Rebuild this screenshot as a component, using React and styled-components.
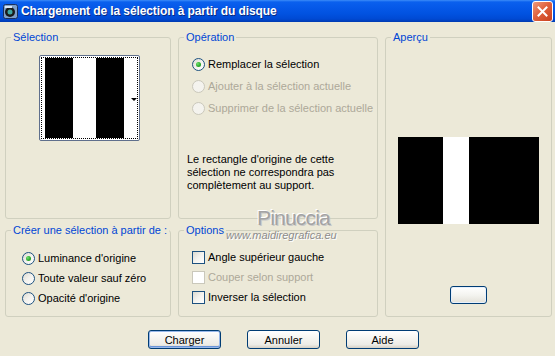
import React from 'react';
import styled, { createGlobalStyle } from 'styled-components';

const Global = createGlobalStyle`
  html, body { margin: 0; padding: 0; background: #ECE9D8; }
  body { font-family: "Liberation Sans", Arial, sans-serif; font-size: 11px; }
  * { box-sizing: border-box; }
`;

const Window = styled.div`
  position: relative;
  width: 555px;
  height: 356px;
  background: #ECE9D8;
  display: flex;
  flex-direction: column;
  overflow: hidden;
  color: #000;
`;

const TitleBar = styled.div`
  height: 22px;
  flex: none;
  display: flex;
  align-items: center;
  padding: 0 2px 0 3px;
  background: linear-gradient(#3C8CF8 0px, #0A60EE 2px, #0558E8 8px, #0152E0 14px, #0049D3 19px, #003BB0 22px);
`;

const TitleText = styled.span`
  margin-left: 3px;
  color: #fff;
  font-family: "Liberation Sans", Arial, sans-serif;
  font-weight: bold;
  font-size: 12px;
  letter-spacing: -0.1px;
  text-shadow: 1px 1px 0 #0A2A80;
  white-space: nowrap;
`;

const CloseButton = styled.div`
  margin-left: auto;
  width: 21px;
  height: 21px;
  border: 1px solid #fff;
  border-radius: 3px;
  background: linear-gradient(135deg, #EE9A7D 0%, #E0623E 45%, #C8411E 100%);
  display: flex;
  align-items: center;
  justify-content: center;
`;

const Body = styled.div`
  display: grid;
  grid-template-columns: 166px 200px 167px;
  grid-template-rows: 188px 93px;
  column-gap: 7px;
  row-gap: 5px;
  padding: 9px 0 0 5px;
`;

const Group = styled.fieldset`
  margin: 0;
  padding: 0;
  min-width: 0;
  border: 1px solid #D0D0BF;
  border-radius: 3px;
  grid-row: ${p => p.$row || 'auto'};
  grid-column: ${p => p.$col || 'auto'};
  display: flex;
  flex-direction: column;
  align-items: ${p => p.$center ? 'center' : 'stretch'};
`;

const Legend = styled.legend`
  margin-left: 5px;
  padding: 0 2px;
  color: #0046D5;
  font-size: 11px;
  line-height: 13px;
  white-space: nowrap;
`;

const Thumb = styled.div`
  margin: 11px 0 0 33px;
  width: 101px;
  height: 86px;
  border: 1px solid #5F6F8C;
  border-radius: 2px;
  background: #fff;
  padding: 1px;
`;

const Focus = styled.div`
  height: 100%;
  border: 1px dotted #000;
  padding-left: 3px;
  display: flex;
`;

const Stripe = styled.div`
  width: ${p => p.$w}px;
  flex: ${p => p.$grow ? 1 : 'none'};
  background: ${p => p.$black ? '#000' : '#fff'};
  display: flex;
  align-items: center;
  justify-content: flex-end;
`;

const Arrow = styled.div`
  width: 0;
  height: 0;
  margin: 2px 0 0 0;
  border-left: 3px solid transparent;
  border-right: 3px solid transparent;
  border-top: 3px solid #000;
`;

const Options = styled.div`
  display: flex;
  flex-direction: column;
  padding: ${p => p.$pt}px 0 0 ${p => p.$pl}px;
`;

const Row = styled.div`
  height: ${p => p.$h}px;
  display: flex;
  align-items: center;
  gap: 3px;
  color: ${p => p.$disabled ? '#ACA899' : '#000'};
  white-space: nowrap;
`;

const RadioCircle = styled.span`
  width: 13px;
  height: 13px;
  flex: none;
  border-radius: 50%;
  border: 1px solid ${p => p.$disabled ? '#CAC8BB' : '#1C5180'};
  background: ${p => p.$disabled ? '#F4F3EE' : 'linear-gradient(135deg, #DCDAD1 0%, #F3F2EE 50%, #FFFFFF 100%)'};
  display: flex;
  align-items: center;
  justify-content: center;
`;

const RadioDot = styled.span`
  width: 5px;
  height: 5px;
  border-radius: 50%;
  background: radial-gradient(circle at 35% 35%, #6EE06E 0%, #2DAA2D 55%, #168A16 100%);
`;

const CheckBox = styled.span`
  width: 13px;
  height: 13px;
  flex: none;
  border: 1px solid ${p => p.$disabled ? '#CAC8BB' : '#1C5180'};
  background: ${p => p.$disabled ? '#fff' : 'linear-gradient(135deg, #DCDAD1 0%, #F3F2EE 50%, #FFFFFF 100%)'};
`;

const Note = styled.p`
  margin: 34px 0 0 8px;
  line-height: 13px;
  font-size: 11px;
`;

const Preview = styled.div`
  margin-top: 93px;
  width: 141px;
  height: 87px;
  display: flex;
`;

const PreviewBlock = styled.div`
  width: ${p => p.$w}px;
  background: ${p => p.$black ? '#000' : '#fff'};
`;

const SmallButton = styled.div`
  margin-top: 62px;
  width: 37px;
  height: 18px;
  border: 1px solid #003C74;
  border-radius: 3px;
  background: linear-gradient(#FFFFFF 0%, #F4F4F0 50%, #E3E1D8 100%);
  box-shadow: inset 0 0 0 1px #E6F0FC;
`;

const ButtonBar = styled.div`
  display: flex;
  justify-content: center;
  gap: 26px;
  padding-left: 12px;
  margin-top: 13px;
`;

const Button = styled.button`
  width: 73px;
  height: 19px;
  padding: 0;
  font-family: "Liberation Sans", Arial, sans-serif;
  font-size: 11px;
  color: #000;
  border: 1px solid #003C74;
  border-radius: 3px;
  background: linear-gradient(#FFFFFF 0%, #F6F5F1 40%, #ECEBE6 80%, #D6D0C5 100%);
  box-shadow: ${p => p.$default ? 'inset 0 0 0 1px #98B8EA, inset 0 -1px 0 1px #6A94D8' : 'none'};
`;

const Watermark = styled.div`
  position: absolute;
  left: 257px;
  top: 206px;
  font-family: "Liberation Sans", Arial, sans-serif;
  font-size: 21px;
  letter-spacing: -0.8px;
  color: #A3A3A3;
  text-shadow: -1px -1px 0 #fff, 1px 1px 0 #c8c8c8;
  pointer-events: none;
`;

const WatermarkUrl = styled.div`
  position: absolute;
  left: 226px;
  top: 229px;
  font-family: "Liberation Sans", Arial, sans-serif;
  font-style: italic;
  font-size: 11px;
  color: #8C8C8C;
  text-shadow: 1px 1px 0 #fff;
  pointer-events: none;
`;

const Radio = ({ checked, disabled, h, children }) => (
  <Row $h={h} $disabled={disabled}>
    <RadioCircle $disabled={disabled}>{checked && <RadioDot />}</RadioCircle>
    {children}
  </Row>
);

const Check = ({ disabled, h, children }) => (
  <Row $h={h} $disabled={disabled}>
    <CheckBox $disabled={disabled} />
    {children}
  </Row>
);

const AppIcon = () => (
  <svg width="15" height="15" viewBox="0 0 15 15">
    <rect x="0.5" y="0.5" width="14" height="14" rx="2" fill="#7FA0C8" stroke="#1B2F5A" />
    <circle cx="7" cy="8" r="5" fill="#1A1A1A" />
    <circle cx="7" cy="8" r="2.5" fill="#3FA6A0" />
    <path d="M2 2 L9 2 L9 4 L2 4 Z" fill="#D8E6F6" />
  </svg>
);

export default function App() {
  return (
    <>
      <Global />
      <Window>
        <TitleBar>
          <AppIcon />
          <TitleText>Chargement de la sélection à partir du disque</TitleText>
          <CloseButton>
            <svg width="11" height="11" viewBox="0 0 11 11">
              <path d="M1.5 1.5 L9.5 9.5 M9.5 1.5 L1.5 9.5" stroke="#fff" strokeWidth="2" strokeLinecap="square" />
            </svg>
          </CloseButton>
        </TitleBar>
        <Body>
          <Group $row="1" $col="1">
            <Legend>Sélection</Legend>
            <Thumb>
              <Focus>
                <Stripe $w={28} $black />
                <Stripe $w={23} />
                <Stripe $w={28} $black />
                <Stripe $grow><Arrow /></Stripe>
              </Focus>
            </Thumb>
          </Group>
          <Group $row="1" $col="2">
            <Legend>Opération</Legend>
            <Options $pt={9} $pl={13}>
              <Radio h={22} checked>Remplacer la sélection</Radio>
              <Radio h={22} disabled>Ajouter à la sélection actuelle</Radio>
              <Radio h={22} disabled>Supprimer de la sélection actuelle</Radio>
            </Options>
            <Note>
              Le rectangle d'origine de cette<br />
              sélection ne correspondra pas<br />
              complètement au support.
            </Note>
          </Group>
          <Group $row="1 / span 2" $col="3" $center>
            <Legend>Aperçu</Legend>
            <Preview>
              <PreviewBlock $w={45} $black />
              <PreviewBlock $w={26} />
              <PreviewBlock $w={70} $black />
            </Preview>
            <SmallButton />
          </Group>
          <Group $row="2" $col="1">
            <Legend>Créer une sélection à partir de :</Legend>
            <Options $pt={11} $pl={16}>
              <Radio h={20} checked>Luminance d'origine</Radio>
              <Radio h={20}>Toute valeur sauf zéro</Radio>
              <Radio h={20}>Opacité d'origine</Radio>
            </Options>
          </Group>
          <Group $row="2" $col="2">
            <Legend>Options</Legend>
            <Options $pt={10} $pl={13}>
              <Check h={20}>Angle supérieur gauche</Check>
              <Check h={20} disabled>Couper selon support</Check>
              <Check h={20}>Inverser la sélection</Check>
            </Options>
          </Group>
        </Body>
        <ButtonBar>
          <Button $default>Charger</Button>
          <Button>Annuler</Button>
          <Button>Aide</Button>
        </ButtonBar>
        <Watermark>Pinuccia</Watermark>
        <WatermarkUrl>www.maidiregrafica.eu</WatermarkUrl>
      </Window>
    </>
  );
}
